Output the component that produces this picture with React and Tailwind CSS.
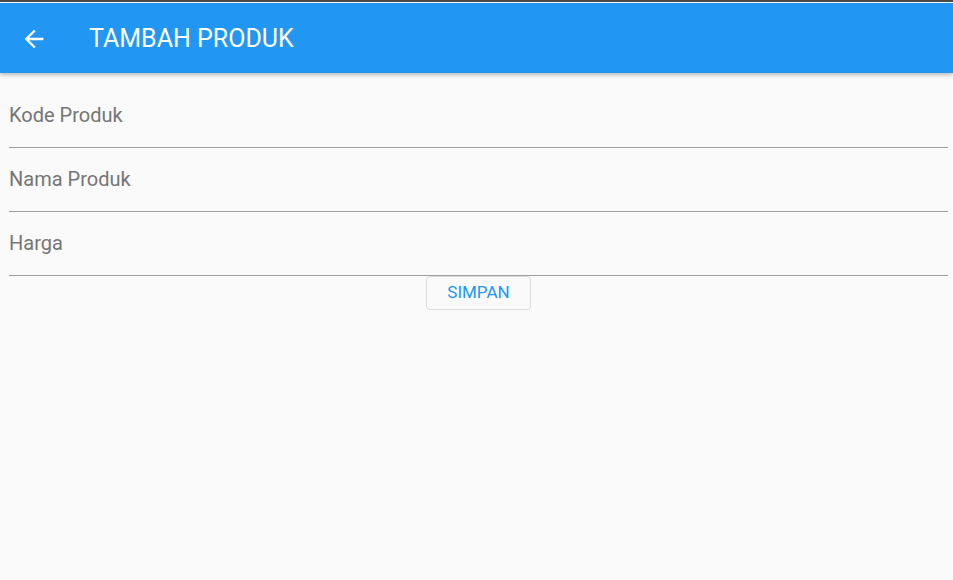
import React from 'react';

const fields = ['Kode Produk', 'Nama Produk', 'Harga'];

export default function App() {
  return (
    <div className="h-[580px] w-[953px] overflow-hidden bg-[#fafafa]" style={{ fontFamily: 'Roboto, sans-serif' }}>
      <div className="h-[2px] bg-[#4b4b4b]" />
      <div className="h-[1px] bg-white" />
      <header className="relative z-10 flex h-[70px] items-center bg-[#2196f3] pt-[2px] shadow-[0_2px_4px_rgba(0,0,0,0.25)]">
        <div className="flex w-[68px] justify-center">
          <svg width="28" height="28" viewBox="0 0 24 24" fill="white">
            <path d="M20 11H7.83l5.59-5.59L12 4l-8 8 8 8 1.41-1.41L7.83 13H20v-2z" />
          </svg>
        </div>
        <h1 className="ml-[21px] text-[25px] font-normal text-white">TAMBAH PRODUK</h1>
      </header>
      <div className="pl-[9px] pr-[5px] pt-[11px]">
        {fields.map((f) => (
          <div key={f} className="flex h-[64px] items-center border-b border-[#9e9e9e] pb-[2px]">
            <span className="text-[20px] text-[#757575]">{f}</span>
          </div>
        ))}
        <div className="flex justify-center">
          <button className="h-[34px] w-[105px] rounded-[4px] border border-[#dcdcdc] text-[17px] text-[#2196f3]">
            SIMPAN
          </button>
        </div>
      </div>
    </div>
  );
}
